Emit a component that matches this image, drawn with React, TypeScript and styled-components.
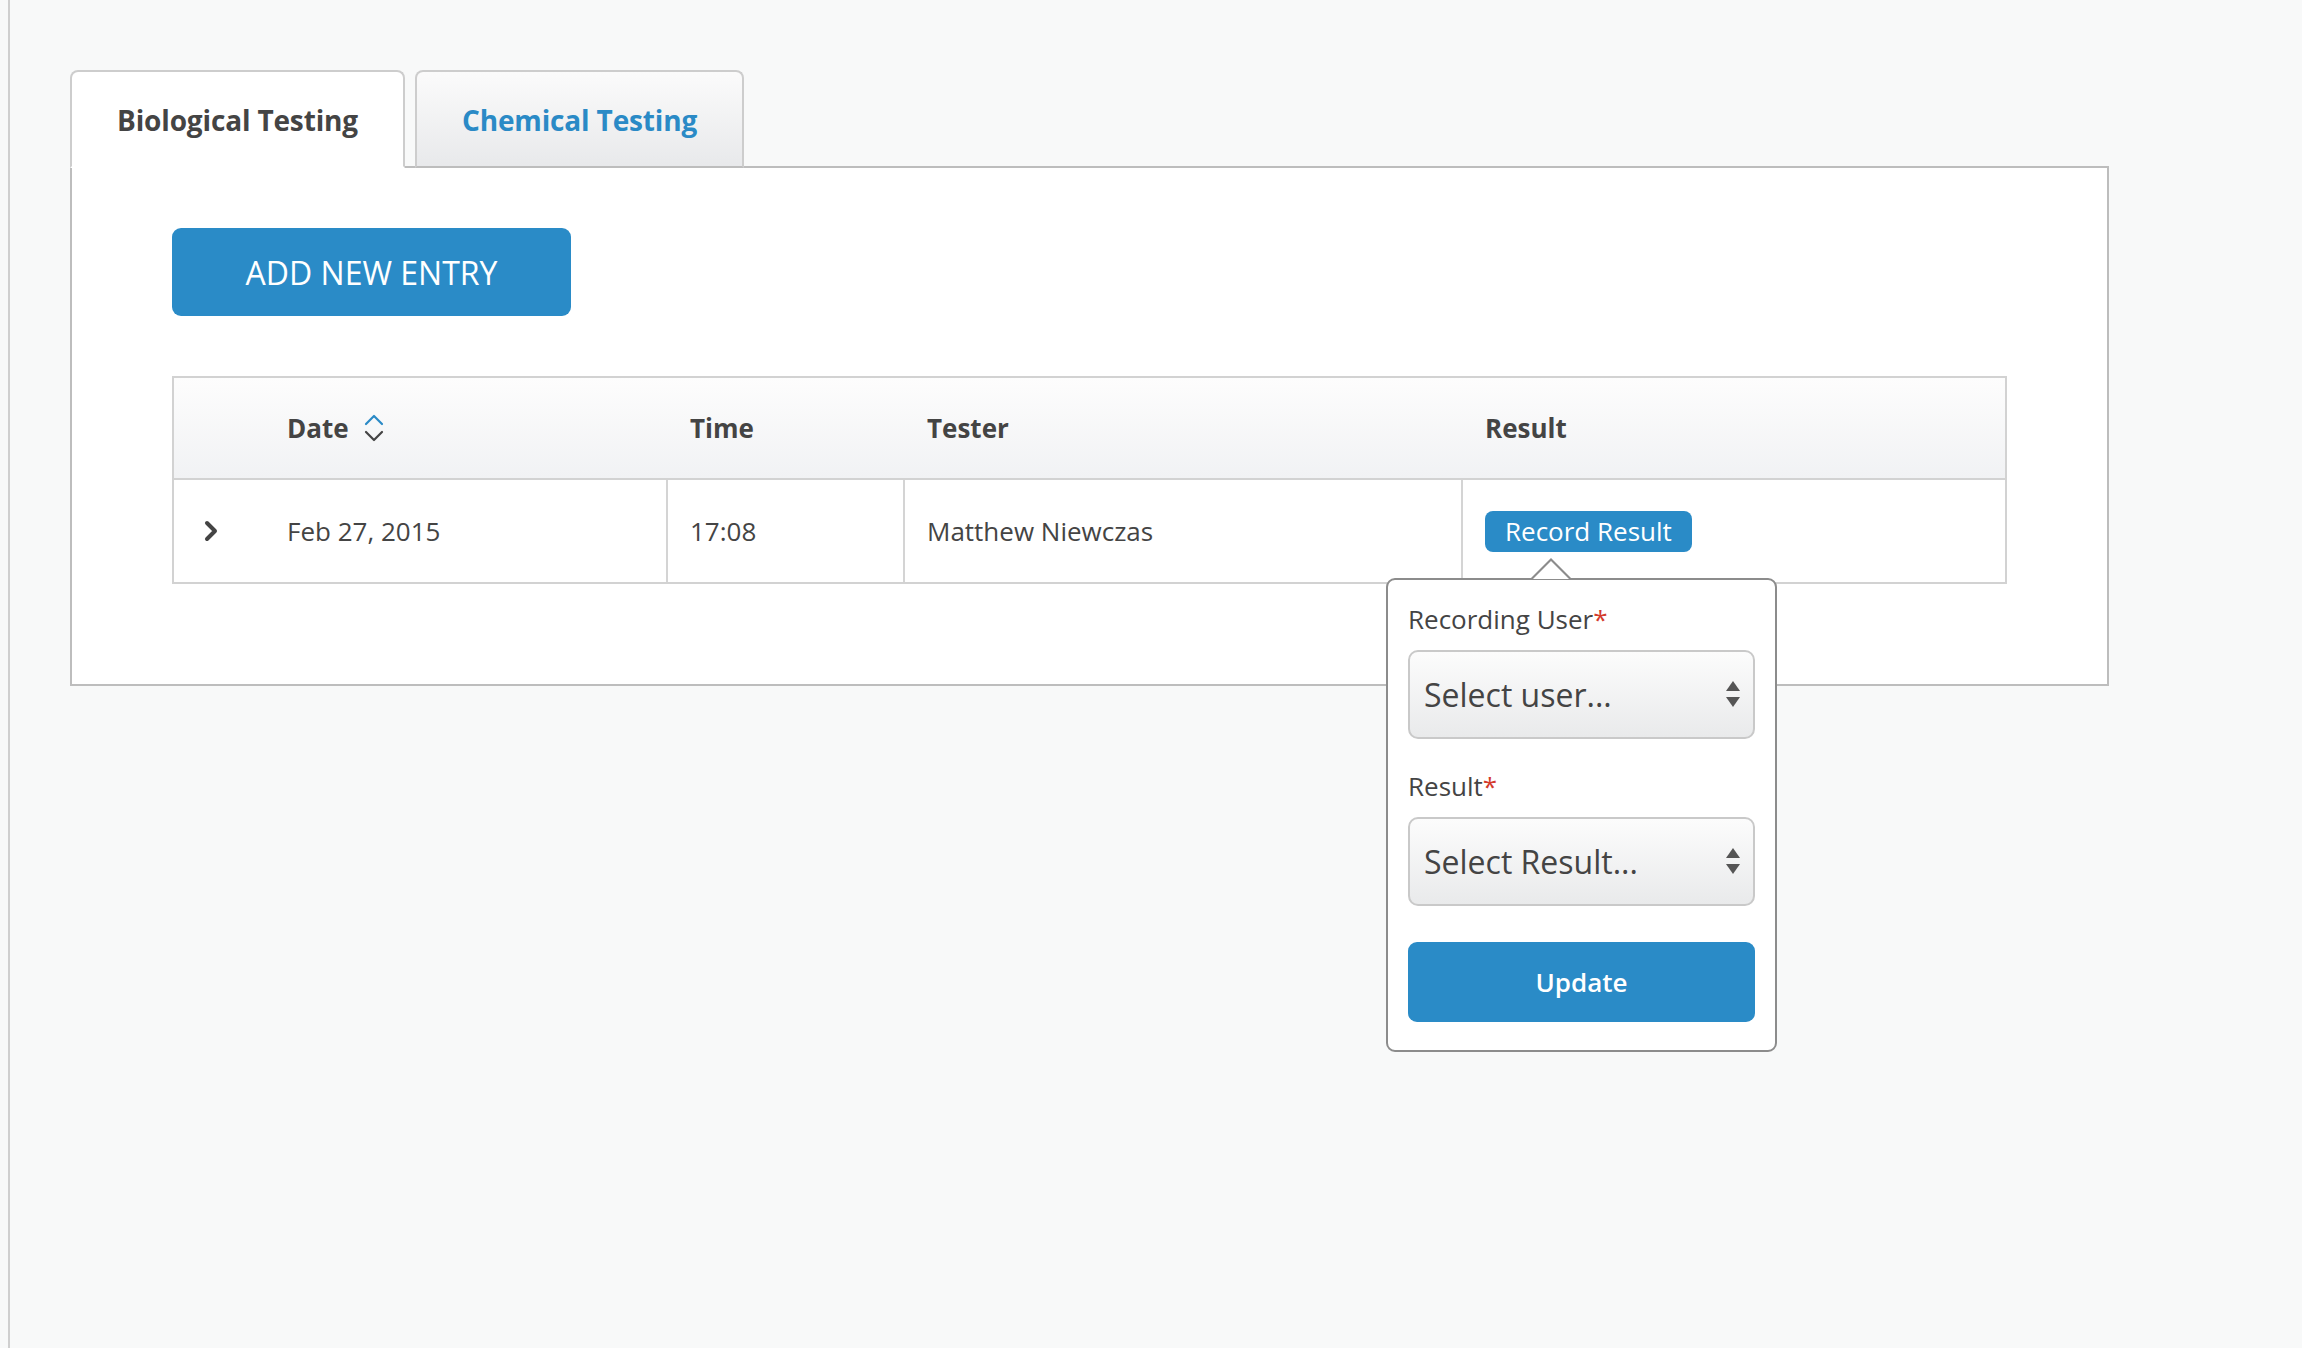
import React from "react";
import styled, { createGlobalStyle } from "styled-components";

const GlobalStyle = createGlobalStyle`
  html, body {
    margin: 0;
    padding: 0;
    background: #f8f9f9;
    font-family: "Open Sans", "Liberation Sans", Arial, sans-serif;
    color: #444;
    -webkit-font-smoothing: antialiased;
  }
  * { box-sizing: border-box; }
`;

const Page = styled.div`
  margin-left: 8px;
  min-height: 100vh;
  border-left: 2px solid #cfcfcf;
  padding: 70px 0 0 60px;
`;

const Container = styled.div`
  width: 2039px;
`;

const TabBar = styled.div`
  display: flex;
  align-items: flex-end;
  gap: 10px;
  position: relative;
  z-index: 1;
  margin-bottom: -2px;
`;

const Tab = styled.div<{ $active?: boolean }>`
  height: 98px;
  padding: 2px 45px 0 45px;
  display: flex;
  align-items: center;
  border: 2px solid #cdcdcd;
  border-bottom: 2px solid ${(p) => (p.$active ? "#fff" : "#bdbdbd")};
  border-radius: 8px 8px 0 0;
  background: ${(p) =>
    p.$active ? "#fff" : "linear-gradient(#fbfbfb, #e8e9eb)"};
  color: ${(p) => (p.$active ? "#444" : "#2a8ac6")};
  font-size: 28px;
  font-weight: 700;
  letter-spacing: -0.15px;
  cursor: pointer;
`;

const Panel = styled.div`
  background: #fff;
  border: 2px solid #bdbdbd;
  padding: 60px 100px 100px 100px;
`;

const PrimaryButton = styled.button`
  width: 399px;
  height: 88px;
  border: none;
  border-radius: 9px;
  background: #2a8bc7;
  color: #fff;
  font-family: inherit;
  font-size: 32px;
  font-weight: 400;
  cursor: pointer;
`;

const Table = styled.div`
  margin-top: 60px;
  border: 2px solid #d2d2d2;
`;

const Row = styled.div<{ $header?: boolean }>`
  display: grid;
  grid-template-columns: 89px 403px 237px 558px 1fr;
  height: 102px;
  background: ${(p) =>
    p.$header ? "linear-gradient(#fdfdfd, #f1f2f4)" : "#fff"};
  border-bottom: ${(p) => (p.$header ? "2px solid #d2d2d2" : "none")};
`;

const Cell = styled.div<{ $divider?: boolean; $bold?: boolean }>`
  display: flex;
  align-items: center;
  padding-left: 22px;
  border-left: 2px solid ${(p) => (p.$divider ? "#d4d4d4" : "transparent")};
  font-size: 26px;
  font-weight: ${(p) => (p.$bold ? 700 : 400)};
  color: #444;
  gap: 14px;
`;

const ExpandCell = styled.div`
  display: flex;
  align-items: center;
  padding-left: 29px;
`;

const ResultWrap = styled.div`
  position: relative;
  display: inline-flex;
`;

const SmallButton = styled.button`
  height: 41px;
  padding: 0 20px;
  border: none;
  border-radius: 8px;
  background: #2a8bc7;
  color: #fff;
  font-family: inherit;
  font-size: 26px;
  font-weight: 400;
  line-height: 41px;
  cursor: pointer;
`;

const Popover = styled.div`
  position: absolute;
  left: -99px;
  top: 67px;
  width: 391px;
  background: #fff;
  border: 2px solid #8c8c8c;
  border-radius: 9px;
  padding: 21px 20px 28px 20px;
  display: flex;
  flex-direction: column;
  z-index: 5;

  &::before,
  &::after {
    content: "";
    position: absolute;
    left: 143px;
    width: 0;
    height: 0;
    border-left: 20px solid transparent;
    border-right: 20px solid transparent;
  }
  &::before {
    top: -22px;
    border-bottom: 20px solid #8c8c8c;
  }
  &::after {
    top: -19px;
    left: 145px;
    border-left-width: 18px;
    border-right-width: 18px;
    border-bottom: 18px solid #fff;
  }
`;

const Label = styled.div<{ $gapTop?: number }>`
  font-size: 26px;
  line-height: 36px;
  color: #444;
  margin-top: ${(p) => p.$gapTop ?? 0}px;
`;

const Required = styled.span`
  color: #d33a2c;
`;

const SelectBox = styled.div`
  margin-top: 13px;
  height: 89px;
  border: 2px solid #c9c9c9;
  border-radius: 10px;
  background: linear-gradient(#fcfcfc, #e9eaeb);
  display: flex;
  align-items: center;
  justify-content: space-between;
  padding: 0 12px 0 14px;
  font-size: 32px;
  color: #444;
`;

const UpdateButton = styled.button`
  margin-top: 36px;
  height: 80px;
  border: none;
  border-radius: 9px;
  background: #2a8bc7;
  color: #fff;
  font-family: inherit;
  font-size: 26px;
  font-weight: 600;
  cursor: pointer;
`;

const SortIcon = () => (
  <svg width="22" height="30" viewBox="0 0 22 30" fill="none">
    <polyline points="3,11 11,3 19,11" stroke="#2a8ac6" strokeWidth="2.2" strokeLinecap="round" strokeLinejoin="round" />
    <polyline points="3,19 11,27 19,19" stroke="#444" strokeWidth="2.2" strokeLinecap="round" strokeLinejoin="round" />
  </svg>
);

const ChevronRight = () => (
  <svg width="16" height="22" viewBox="0 0 16 22" fill="none">
    <polyline points="4,3 12,11 4,19" stroke="#444" strokeWidth="4" strokeLinecap="round" strokeLinejoin="round" />
  </svg>
);

const Carets = () => (
  <svg width="16" height="30" viewBox="0 0 16 30">
    <polygon points="8,2 15,12 1,12" fill="#555" />
    <polygon points="1,18 15,18 8,28" fill="#555" />
  </svg>
);

export default function App() {
  return (
    <>
      <GlobalStyle />
      <Page>
        <Container>
          <TabBar>
            <Tab $active>Biological Testing</Tab>
            <Tab>Chemical Testing</Tab>
          </TabBar>
          <Panel>
            <PrimaryButton>ADD NEW ENTRY</PrimaryButton>
            <Table>
              <Row $header>
                <ExpandCell />
                <Cell $bold>
                  Date
                  <SortIcon />
                </Cell>
                <Cell $bold>Time</Cell>
                <Cell $bold>Tester</Cell>
                <Cell $bold>Result</Cell>
              </Row>
              <Row>
                <ExpandCell>
                  <ChevronRight />
                </ExpandCell>
                <Cell>Feb 27, 2015</Cell>
                <Cell $divider>17:08</Cell>
                <Cell $divider>Matthew Niewczas</Cell>
                <Cell $divider>
                  <ResultWrap>
                    <SmallButton>Record Result</SmallButton>
                    <Popover>
                      <Label>
                        Recording User<Required>*</Required>
                      </Label>
                      <SelectBox>
                        Select user...
                        <Carets />
                      </SelectBox>
                      <Label $gapTop={29}>
                        Result<Required>*</Required>
                      </Label>
                      <SelectBox>
                        Select Result...
                        <Carets />
                      </SelectBox>
                      <UpdateButton>Update</UpdateButton>
                    </Popover>
                  </ResultWrap>
                </Cell>
              </Row>
            </Table>
          </Panel>
        </Container>
      </Page>
    </>
  );
}
